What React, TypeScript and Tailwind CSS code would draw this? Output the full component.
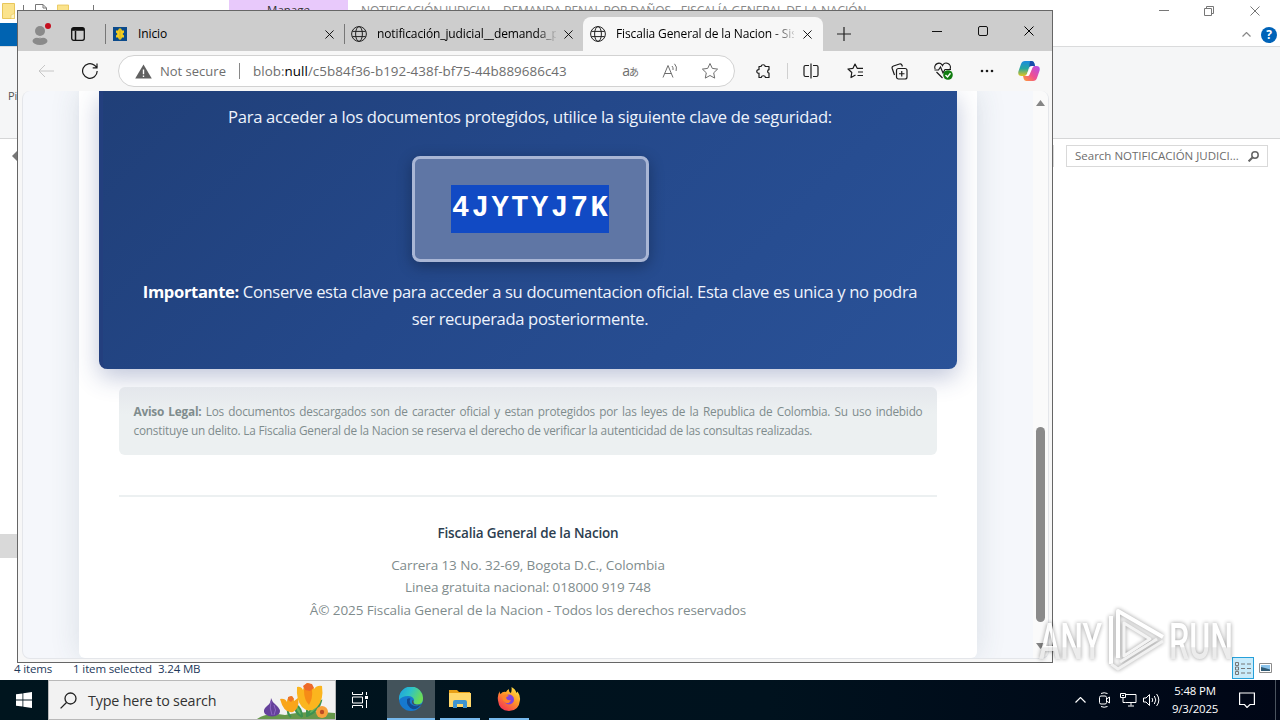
import React from "react";
import clsx from "clsx";

function CloseIcon({ className }: { className?: string }) {
  return (
    <svg viewBox="0 0 10 10" fill="none" stroke="currentColor" className={clsx("shrink-0", className)}>
      <path d="M.5.5l9 9M9.5.5l-9 9" />
    </svg>
  );
}

function GlobeIcon() {
  return (
    <svg viewBox="0 0 16 16" fill="none" stroke="#222" className="h-4 w-4 shrink-0">
      <circle cx="8" cy="8" r="7.4" />
      <ellipse cx="8" cy="8" rx="3.4" ry="7.4" />
      <path d="M1.3 5.4h13.4M1.3 10.6h13.4" />
    </svg>
  );
}

function FolderIcon({ className }: { className?: string }) {
  return (
    <svg viewBox="0 0 13 16" className={className}>
      <path d="M.5.5h12v15H.5z" fill="#fbe38c" stroke="#e8c65a" />
      <path d="M9 15.5V12l3.5-1.500v5z" fill="#fff4c2" stroke="#e8c65a" strokeWidth=".6" />
    </svg>
  );
}

function ExplorerWindow() {
  return (
    <div className="flex h-[680px] flex-col bg-white">
      <div className="flex h-[23px] shrink-0">
        <div className="flex w-[229px] pl-0.5 pt-[3px]">
          <FolderIcon className="h-4 w-[13px]" />
          <div className="ml-2 mt-0.5 h-4 w-px bg-[#777]" />
          <svg viewBox="0 0 12 14" fill="#fff" stroke="#777" className="ml-[11px] mt-px h-3.5 w-3">
            <path d="M.5.5h7.500l3.500 3.500v9.500H.5zM8 .5V4h3.500" />
          </svg>
          <FolderIcon className="ml-2.5 mt-px h-4 w-3" />
          <div className="ml-6 mt-0.5 h-4 w-px bg-[#777]" />
        </div>
        <div className="h-full w-[119px] bg-[#e8c9fb] pt-[2px] text-center text-[11.5px] leading-4 text-[#333]">Manage</div>
        <div className="ml-[13px] w-[520px] whitespace-nowrap pt-[3px] text-[12px] leading-4 tracking-[-0.1px] text-[#888]">
          NOTIFICACIÓN JUDICIAL - DEMANDA PENAL POR DAÑOS - FISCALÍA GENERAL DE LA NACIÓN
        </div>
        <div className="ml-auto flex items-center pr-5 pb-0.5 text-[#777]">
          <div className="h-px w-2.5 bg-[#777]" />
          <svg viewBox="0 0 10 10" fill="none" stroke="currentColor" className="ml-[35px] h-2.5 w-2.5">
            <path d="M.5 2.500h7v7h-7zM2.500 2.500v-2h7v7h-2" />
          </svg>
          <CloseIcon className="ml-9 h-2.5 w-2.5" />
        </div>
      </div>
      <div className="flex h-6 shrink-0 items-center border-b border-[#dadbdc]">
        <div className="h-full w-[18px] bg-[#0063b1]" />
        <svg viewBox="0 0 9 5" fill="none" stroke="#888" strokeWidth="1.2" className="ml-auto h-[5px] w-[9px]">
          <path d="M.5 4.500l4-4 4 4" />
        </svg>
        <div className="ml-2.5 mr-[3px] flex h-4 w-4 items-center justify-center rounded-full bg-[#0063b8] text-xs font-bold text-white">?</div>
      </div>
      <div className="h-[92px] shrink-0 border-b border-[#d5d6d7] bg-[#f5f6f7] pl-2 pt-[41px] text-[11px] leading-4 text-[#555]">Pi</div>
      <div className="flex h-[34px] shrink-0 items-center">
        <svg viewBox="0 0 8 10" className="ml-3 h-2.5 w-2" fill="#777">
          <path d="M0 5l5-5h3v10H5z" />
        </svg>
        <div className="ml-auto h-[22px] w-px bg-[#d9d9d9]" />
        <div className="ml-3 mr-3 flex h-[22px] w-[202px] items-center justify-between border border-[#d9d9d9] pl-2 pr-2 text-[11.5px] text-[#6d6d6d]">
          <span className="whitespace-nowrap">Search NOTIFICACIÓN JUDICI...</span>
          <svg viewBox="0 0 11 11" fill="none" stroke="#666" strokeWidth="1.500" className="h-[11px] w-[11px]">
            <circle cx="7" cy="4" r="3.200" />
            <path d="M4.700 6.300L.6 10.400" strokeWidth="2" />
          </svg>
        </div>
      </div>
      <div className="flex-1 pt-[361px]">
        <div className="h-6 w-[18px] bg-[#d9d9d9]" />
      </div>
      <div className="flex h-6 shrink-0 items-center pl-3.5 pr-2 text-[11.5px] tracking-[-0.15px] text-[#1e395b]">
        <span className="pt-0.5">4 items</span>
        <span className="ml-[21px] pt-0.5">1 item selected</span>
        <span className="ml-1.5 pt-0.5">3.24 MB</span>
        <div className="ml-auto flex h-[22px] w-[22px] items-center justify-center border border-[#26a0da] bg-[#c9ebfa]">
          <svg viewBox="0 0 16 13" fill="none" stroke="#777" className="h-[13px] w-4">
            <path d="M.5.5h3v3h-3zM.5 5h3v3h-3zM.5 9.500h3v3h-3z" />
            <path d="M6 2h4M12 2h4M6 6.500h4M12 6.500h4M6 11h4M12 11h4" />
          </svg>
        </div>
        <svg viewBox="0 0 13 10" className="ml-[5px] h-2.5 w-[13px]">
          <path d="M.5.5h12v9H.5z" fill="#fff" stroke="#8c8c8c" />
          <path d="M2 2h9v6H2z" fill="#8cc4ec" />
          <path d="M2 4l4 1 5 1.500V8H2z" fill="#315b75" />
        </svg>
      </div>
    </div>
  );
}

function TabStrip() {
  return (
    <div className="flex h-10 shrink-0 items-center bg-[#cdcdcd] pt-1.5 text-[12px] tracking-[-0.12px] text-black">
      <svg viewBox="0 0 22 22" className="ml-[11px] h-[22px] w-[22px]">
        <circle cx="11" cy="8" r="5" fill="#8a8a8a" />
        <ellipse cx="11" cy="18" rx="7.500" ry="4" fill="#8a8a8a" />
        <path d="M5 13.600q6 2.500 12 0" stroke="#cdcdcd" fill="none" />
        <circle cx="19" cy="3" r="3" fill="#c50f1f" />
      </svg>
      <svg viewBox="0 0 14 14" fill="none" stroke="#111" strokeWidth="1.300" className="ml-5 h-3.5 w-3.5">
        <rect x=".7" y=".7" width="12.600" height="12.600" rx="2" />
        <path d="M1 3h12M1 1.800h12M4.500 4v9" strokeWidth="1.500" />
      </svg>
      <div className="ml-5 h-5 w-px bg-[#777]" />
      <svg viewBox="0 0 14 14" className="ml-[7px] h-3.5 w-3.5">
        <path d="M0 0h14v14H0z" fill="#0b4a8b" />
        <path d="M6 1.500h2l1 2h2v2L9.500 7 11 8.500v2H9l-1 2H6l-1-2H3v-2L4.500 7 3 5.500v-2h2z" fill="#f5cd1d" />
        <path d="M7 2v10" stroke="#b99c28" strokeWidth=".6" />
      </svg>
      <span className="ml-[11px] w-[187px]">Inicio</span>
      <CloseIcon className="h-[9px] w-[9px]" />
      <div className="ml-2.5 h-5 w-px bg-[#777]" />
      <div className="ml-1.5 flex w-[232px] items-center">
        <GlobeIcon />
        <span className="ml-2.5 w-[179px] overflow-hidden whitespace-nowrap bg-[linear-gradient(90deg,#000_160px,transparent_181px)] bg-clip-text text-transparent">
          notificación_judicial__demanda_penal
        </span>
        <CloseIcon className="ml-[8px] h-[9px] w-[9px]" />
      </div>
      <div className="flex h-[34px] w-[240px] items-center rounded-t-lg bg-[#f7f7f7] pl-[7px]">
        <GlobeIcon />
        <span className="ml-2.5 w-[178px] overflow-hidden whitespace-nowrap bg-[linear-gradient(90deg,#000_155px,transparent_183px)] bg-clip-text text-transparent">
          Fiscalia General de la Nacion - Sistema
        </span>
        <CloseIcon className="ml-[9px] h-[9px] w-[9px]" />
      </div>
      <svg viewBox="0 0 14 14" stroke="#222" className="ml-[14px] h-3.5 w-3.5">
        <path d="M7 0v14M0 7h14" strokeWidth="1.200" />
      </svg>
      <div className="mb-1.5 ml-auto mr-[18px] flex items-center">
        <div className="h-px w-2.5 bg-[#111]" />
        <div className="ml-9 h-2.5 w-2.5 rounded-[2px] border border-[#111]" />
        <CloseIcon className="ml-[36px] h-2.5 w-2.5" />
      </div>
    </div>
  );
}

function Toolbar() {
  return (
    <div className="flex h-10 shrink-0 items-center bg-[#f7f7f7] text-[#1b1b1b]">
      <svg viewBox="0 0 16 14" fill="none" stroke="#c6c6c6" className="ml-5 h-3.5 w-4">
        <path d="M16 7H1M7 1L1 7l6 6" />
      </svg>
      <svg viewBox="0 0 16 16" fill="none" stroke="currentColor" strokeWidth="1.200" className="ml-7 h-4 w-4">
        <path d="M15.200 8A7.300 7.300 0 1 1 12.500 2.300L15 4.500M15 .5v4.300h-4.300" />
      </svg>
      <div className="ml-5 flex h-8 w-[617px] items-center rounded-full border border-[#d2d2d2] bg-white pl-4 text-[13px] text-[#6e6e6e]">
        <svg viewBox="0 0 16 14" className="h-[15px] w-[17px]">
          <path d="M8 .3L15.800 13.700H.2z" fill="#616161" />
          <path d="M8 5v4.500M8 10.800v1.400" stroke="#fff" strokeWidth="1.300" />
        </svg>
        <span className="ml-2 w-[67px] whitespace-nowrap pt-px">Not secure</span>
        <div className="ml-3 h-4 w-px bg-[#888]" />
        <span className="ml-[13px] whitespace-nowrap pt-px text-[13.4px] tracking-[0.04px]">
          blob:<span className="text-black">null</span>/c5b84f36-b192-438f-bf75-44b889686c43
        </span>
        <div className="ml-auto mr-[15px] flex items-center">
          <span className="font-['Open_Sans','Noto_Sans_CJK_JP',sans-serif] text-[14px] leading-4 tracking-[-1px]">
            a<span className="text-[10px]">あ</span>
          </span>
          <svg viewBox="0 0 17 16" fill="none" stroke="#6e6e6e" className="ml-6 h-4 w-[17px]">
            <path d="M1 14.500L6 2.500l5 12M2.700 10.500h6.600M10 3q1.500 1.500 1 4M12.500.8q3 3 1.600 7.200" />
          </svg>
          <svg viewBox="0 0 18 18" fill="none" stroke="#6e6e6e" className="ml-[22px] h-[18px] w-[18px]">
            <path d="M9 1.500l2.300 4.900 5.300.7-3.900 3.700 1 5.300L9 13.500l-4.700 2.600 1-5.300L1.400 7.100l5.300-.7z" strokeLinejoin="round" />
          </svg>
        </div>
      </div>
      <svg viewBox="0 0 16 16" fill="none" stroke="currentColor" strokeWidth="1.200" className="ml-[21px] h-4 w-4">
        <path d="M5 3.500a2.200 2.200 0 0 1 4.300 0H13v3.200a1.800 1.800 0 0 0 0 3.500v4.300H9.500a2.200 2.200 0 0 0-4.300 0H3v-4.300a1.800 1.800 0 1 1 0-3.500V3.500z" strokeLinejoin="round" />
      </svg>
      <div className="ml-[15px] h-4 w-px bg-[#d0d0d0]" />
      <svg viewBox="0 0 16 16" fill="none" stroke="currentColor" strokeWidth="1.200" className="ml-[15px] h-4 w-4">
        <path d="M6 2.500H2.500a1.500 1.500 0 0 0-1.500 1.500v8a1.500 1.500 0 0 0 1.500 1.500H6M10 2.500h3.500A1.500 1.500 0 0 1 15 4v8a1.500 1.500 0 0 1-1.500 1.500H10M8 .5v15" />
      </svg>
      <svg viewBox="0 0 17 16" fill="none" stroke="currentColor" strokeWidth="1.200" className="ml-7 h-4 w-[17px]">
        <path d="M8.500 12L4 14.500l.8-5L1 6l5-.7L8 1l2.200 4.300H16M11 9h5M10.500 12.500H16" strokeLinejoin="round" />
      </svg>
      <svg viewBox="0 0 17 17" fill="none" stroke="currentColor" strokeWidth="1.200" className="ml-[27px] h-[17px] w-[17px]">
        <rect x="5.500" y="5.500" width="10.500" height="10.500" rx="2" />
        <path d="M10.750 8v5.500M8 10.750h5.500M3.500 12L1.200 5.500A2 2 0 0 1 2.500 3l6-2a2 2 0 0 1 2.500 1.300l.4 1.200" />
      </svg>
      <svg viewBox="0 0 19 18" fill="none" stroke="currentColor" strokeWidth="1.200" className="ml-[26px] h-[18px] w-[19px]">
        <path d="M1.200 7a4 4 0 0 1 7.300-3.500A4 4 0 0 1 16 7M2.500 10l6 6M.5 8h4l2-3 2.500 6 2-3.500h6" />
        <circle cx="14" cy="13" r="4.800" fill="#107c10" stroke="none" />
        <path d="M11.500 13l2 2 3-3.700" stroke="#fff" strokeWidth="1.400" />
      </svg>
      <svg viewBox="0 0 14 4" fill="currentColor" className="ml-[27px] h-1 w-3.5">
        <circle cx="2" cy="2" r="1.300" /><circle cx="7" cy="2" r="1.300" /><circle cx="12" cy="2" r="1.300" />
      </svg>
      <svg viewBox="0 0 22 20" className="ml-[24px] h-5 w-[22px]">
        <defs>
          <linearGradient id="cpA" x1="0" y1="0" x2="0" y2="1">
            <stop offset="0" stopColor="#1b8be0" /><stop offset=".5" stopColor="#27a7a0" /><stop offset="1" stopColor="#e3c41c" />
          </linearGradient>
          <linearGradient id="cpB" x1="1" y1="0" x2="0" y2="1">
            <stop offset="0" stopColor="#b04df0" /><stop offset=".55" stopColor="#f0508f" /><stop offset="1" stopColor="#ffa032" />
          </linearGradient>
        </defs>
        <path d="M7 0h6.500q2 0 2.700 2l.8 3h-3.500q-2 0-2.700 2.200L9 13q-.8 2-2.800 2H3.500Q-.5 15 .4 10.500L3 3Q4 0 7 0z" fill="url(#cpA)" />
        <path d="M12 0h1.500q2 0 2.700 2l.8 3h-3.500q-1.500 0-2.200 1z" fill="#174bab" />
        <path d="M15 20H8.500q-2 0-2.700-2L5 15h1.500q2.500 0 3.200-2.200L11.500 7q.6-2 2.600-2h4.400q4 0 3.100 4.500L19 17q-1 3-4 3z" fill="url(#cpB)" />
        <path d="M11.700 6.500L9 13q-.6 2-2.200 2h3q1.200 0 1.800-1.500L14 8q.5-2 2-3h-2q-1.700 0-2.300 1.500z" fill="#fff" />
      </svg>
    </div>
  );
}

function AccessKey() {
  return (
    <div className="h-[278px] rounded-b-lg border-l-4 border-[#233f7e] bg-[linear-gradient(135deg,#203f78_0%,#24488a_45%,#2a5298_100%)] px-9 pt-3 text-center text-[16.6px] leading-[27px] text-[#eef3fc] shadow-[0_8px_25px_rgba(42,64,130,0.3)]">
      <p className="tracking-[-0.3px]">Para acceder a los documentos protegidos, utilice la siguiente clave de seguridad:</p>
      <div className="mx-auto mt-[26px] flex h-[106px] w-[237px] items-start justify-center rounded-lg border-3 border-[#a9b6d5] bg-[#5f76a5] pt-[26px] shadow-[0_4px_15px_rgba(0,0,0,0.3)]">
        <span className="block h-12 w-[158px] whitespace-nowrap bg-[#114ac4] pl-px text-left font-['Liberation_Mono',monospace] text-[28.8px] font-bold leading-[48px] tracking-[2.5px] text-white">
          4JYTYJ7K
        </span>
      </div>
      <p className="mt-4 whitespace-nowrap tracking-[-0.355px]">
        <b className="text-white">Importante:</b> Conserve esta clave para acceder a su documentacion oficial. Esta clave es unica y no podra
        <br />
        ser recuperada posteriormente.
      </p>
    </div>
  );
}

function Page() {
  return (
    <div className="flex h-[568px] w-[1027px] overflow-hidden rounded-lg border border-t-0 border-[#e4e6ea] bg-[#f5f7fb]">
      <div className="ml-14 h-[567px] w-[898px] rounded-b-md bg-white px-5 shadow-[0_0_30px_rgba(50,80,100,0.14)]">
        <AccessKey />
        <div className="mx-5 mt-[18px] h-[68px] rounded-md bg-[#ecf0f1] bg-linear-to-b from-[#e4e7ec] to-[#ecf0f1] to-40% px-[14.5px] pt-[15px] text-justify text-[11.8px] leading-[19px] tracking-[-0.22px] text-[#7f8c8d]">
          <b>Aviso Legal:</b> Los documentos descargados son de caracter oficial y estan protegidos por las leyes de la
          Republica de Colombia. Su uso indebido constituye un delito. La Fiscalia General de la Nacion se reserva el
          derecho de verificar la autenticidad de las consultas realizadas.
        </div>
        <footer className="mx-5 mt-10 border-t-2 border-[#ecf0f1] pt-[25px] text-center text-[13.5px] leading-[22.500px] tracking-[-0.1px] text-[#7f8c8d]">
          <p className="mb-[9px] text-[13.5px] font-semibold tracking-[-0.18px] text-[#2c3e50]">Fiscalia General de la Nacion</p>
          <p>Carrera 13 No. 32-69, Bogota D.C., Colombia</p>
          <p>Linea gratuita nacional: 018000 919 748</p>
          <p>Â© 2025 Fiscalia General de la Nacion - Todos los derechos reservados</p>
        </footer>
      </div>
      <div className="ml-auto flex w-[15px] flex-col items-center bg-[#fafafa] pt-[9px] pb-[9px]">
        <svg viewBox="0 0 9 6" className="h-1.5 w-[9px]" fill="#858585"><path d="M4.500 0L9 6H0z" /></svg>
        <div className="mt-[321px] h-[195px] w-[9px] rounded-full bg-[#8a8a8a]" />
        <svg viewBox="0 0 9 6" className="mt-auto h-1.5 w-[9px]" fill="#858585"><path d="M4.500 6L9 0H0z" /></svg>
      </div>
    </div>
  );
}

function BrowserWindow() {
  return (
    <div className="absolute left-[17px] top-2.5 flex h-[653px] w-[1036px] flex-col border border-[#666] bg-[#f7f7f7]">
      <TabStrip />
      <Toolbar />
      <div className="pl-1">
        <Page />
      </div>
    </div>
  );
}

function Flowers() {
  return (
    <svg viewBox="0 0 80 38" className="h-[38px] w-20">
      <path d="M2 38Q12 31 30 34Q50 29 80 32V38z" fill="#66984b" />
      <path d="M16 17q1 4 5 7q6 5 3 9q-7 5-14 0q-3-4 2-8q4-3 4-8z" fill="#65419b" />
      <path d="M16 20q-2 7 1 14M19 24q3 5 0 10" stroke="#8e68c2" fill="none" />
      <path d="M33 28q-1 5 3 8M52 25v11M52 35q5-12 14-15q-2 10-14 15M47 36q-8-5-7-13q7 4 7 13" stroke="#3d9150" strokeWidth="2" fill="#67b35e" />
      <path d="M25 18q5-1 7 3q0-5 4-6q3 1 3 5l4-3q2 10-5 14q-9 2-13-13z" fill="#f9a51a" />
      <path d="M42 6q4-1 6 3q1-6 5-7q4 1 6 6q3-4 8-3q2 14-5 21q-8 7-15 0q-6-7-5-20z" fill="#fbb51e" />
      <path d="M49 9q4-6 8 0q1 8-3 15q-5-5-5-15z" fill="#f68b16" />
      <path d="M48 5l4-3 5 1 2 4-4 3-5-1z" fill="#ed6a2a" />
      <path d="M33 16l4-1 2 3-3 3-3-2z" fill="#ed752a" />
      <circle cx="67" cy="31" r="6" fill="#f7a13c" />
      <circle cx="67" cy="31" r="2.200" fill="#bb4b25" />
    </svg>
  );
}

function EdgeLogo() {
  return (
    <svg viewBox="0 0 24 24" className="h-6 w-6">
      <defs>
        <linearGradient id="edgeTop" x1="0" y1="0" x2="1" y2=".4">
          <stop offset="0" stopColor="#1c9de0" /><stop offset=".5" stopColor="#2dc2c8" /><stop offset="1" stopColor="#6bdc58" />
        </linearGradient>
      </defs>
      <circle cx="12" cy="12" r="12" fill="#1679cf" />
      <path d="M0 11A12 12 0 0 1 24 12q0 5-5.500 5.500-4 0-4-2.500 0-1 .7-2-1.300-4-6.200-4Q3 9 0 13z" fill="url(#edgeTop)" />
      <path d="M8 12.500q-1 7 6 9.800 4 .3 7.500-4.300-5 2.500-9-.5-3-2.500-1-6-2.500-.8-3.500 1z" fill="#124a91" />
      <path d="M14.500 13q-1 2.500 1 4 3.500 1.700 8 0-2 3-4.500 1.500-7 0-6-5z" fill="#43535b" />
    </svg>
  );
}

function FirefoxLogo() {
  return (
    <svg viewBox="0 0 24 24" className="h-6 w-6">
      <defs>
        <linearGradient id="fx" x1=".9" y1="0" x2=".2" y2="1">
          <stop offset="0" stopColor="#fff04a" /><stop offset=".45" stopColor="#ff9a27" /><stop offset="1" stopColor="#f32d57" />
        </linearGradient>
      </defs>
      <path d="M3 4q-.5 2 .5 3Q6 4 9 5q1-2 3-3-.5 3 2 4 1-3 .5-6 4 2 5 6l1-1.500q3 4 2.500 8.500-1 11-11 11T1 13.500Q0 8 3 4z" fill="url(#fx)" />
      <circle cx="12" cy="12.500" r="5" fill="#7f43df" />
      <path d="M5 9q4-3 7 0-3 .5-3 2 1.500 3 5 2-1 3.500-5 3-4-2-4-7z" fill="#ff8428" />
    </svg>
  );
}

function Taskbar() {
  return (
    <div className="flex h-10 items-stretch bg-linear-to-r from-[#00151e] via-[#00121e] via-60% to-[#000616] text-white">
      <div className="flex w-12 items-center justify-center">
        <svg viewBox="0 0 16 16" fill="#fff" className="h-4 w-4">
          <path d="M0 2.300L6.500 1.400v6.200H0zM7.300 1.300L16 0v7.600H7.300zM0 8.400h6.500v6.200L0 13.700zM7.300 8.400H16V16l-8.700-1.300z" />
        </svg>
      </div>
      <div className="flex w-72 items-center border border-[#b9b9b9] bg-[#f2f2f2] pl-[11px] text-[#333]">
        <svg viewBox="0 0 17 17" fill="none" stroke="#222" strokeWidth="1.300" className="h-[17px] w-[17px]">
          <circle cx="10.500" cy="6.500" r="5.500" />
          <path d="M6.500 10.500L.6 16.400" />
        </svg>
        <span className="ml-[11px] whitespace-nowrap pt-0.5 text-[14.3px] tracking-[-0.17px]">Type here to search</span>
        <div className="ml-auto"><Flowers /></div>
      </div>
      <div className="flex w-[51px] items-center pl-4">
        <svg viewBox="0 0 16 16" fill="none" stroke="#fff" className="h-4 w-4">
          <path d="M.5 0v2.500h10V0M.5 5h10v6H.5zM.5 16v-2.500h10V16M14.500 0v3M14.500 8v8" />
          <path d="M13 4h3v3h-3z" fill="#fff" stroke="none" />
        </svg>
      </div>
      <div className="flex w-12 items-center justify-center border-b-2 border-[#76b9ed] bg-[#43535b]"><EdgeLogo /></div>
      <div className="ml-[5px] flex w-10 items-center justify-center border-b-2 border-[#76b9ed]">
        <svg viewBox="0 0 22 18" className="h-[18px] w-[22px]">
          <path d="M0 0h8l2 2h11v5H0z" fill="#e8a018" />
          <path d="M0 3h22v14H0z" fill="#ffd76a" />
          <path d="M4 18v-6q0-2 2-2h10q2 0 2 2v6h-4v-4H8v4z" fill="#3d94d0" />
        </svg>
      </div>
      <div className="ml-[9px] flex w-10 items-center justify-center border-b-2 border-[#76b9ed]"><FirefoxLogo /></div>
      <div className="ml-auto flex items-center">
        <svg viewBox="0 0 11 6" fill="none" stroke="#fff" strokeWidth="1.200" className="h-1.5 w-[11px]">
          <path d="M.5 5.500l5-5 5 5" />
        </svg>
        <svg viewBox="0 0 11 16" fill="none" stroke="#fff" className="ml-[13px] h-4 w-[11px]">
          <rect x=".5" y="4" width="7" height="8" rx="1.500" />
          <path d="M7.500 7L10.500 5v6l-3-2M2 1.500Q5 0 8.500 1.500M2 14.500Q5 16 8.500 14.500" />
        </svg>
        <svg viewBox="0 0 17 14" fill="none" stroke="#fff" className="ml-2.5 h-3.5 w-[17px]">
          <path d="M6 1.500h10v8H5.500M3 5v4.500h2.500M11 9.500v3M8 13h6M.5.5h5v4h-5zM2 2.500h2" />
        </svg>
        <svg viewBox="0 0 17 14" fill="none" stroke="#fff" className="ml-1.5 h-3.5 w-[17px]">
          <path d="M.5 5h2.500l3.500-3.500v11L3 9H.5zM9 5q1.500 2 0 4M11.300 3q3 4 0 8M13.600 1q4.500 6 0 12" />
        </svg>
        <div className="ml-[9px] w-[52px] whitespace-nowrap text-center text-[11.4px] leading-[18px] tracking-[-0.15px]">
          <div>5:48 PM</div>
          <div>9/3/2025</div>
        </div>
        <svg viewBox="0 0 16 16" fill="none" stroke="#fff" strokeWidth="1.200" className="ml-[18px] h-4 w-4">
          <path d="M.6 1h14.800v11.500H11L8 15.500l-2.500-3H.6z" />
        </svg>
        <div className="ml-5 h-10 w-px bg-[#4a535e]" />
        <div className="w-[4px]" />
      </div>
    </div>
  );
}

function Watermark() {
  return (
    <svg viewBox="0 0 200 68" className="absolute left-[1038px] top-[606px] h-[68px] w-[200px] opacity-80 drop-shadow-[0_0_2px_rgba(0,0,0,0.5)]">
      <defs>
        <linearGradient id="wm" x1="0" y1="0" x2="0" y2="1">
          <stop offset=".58" stopColor="#fff" /><stop offset=".6" stopColor="#e8e8e8" />
        </linearGradient>
      </defs>
      <g fill="url(#wm)" fontFamily="Roboto, sans-serif" fontSize="50" fontWeight="500">
        <text x="1" y="53" textLength="63" lengthAdjust="spacingAndGlyphs">ANY</text>
        <text x="131" y="53" textLength="64" lengthAdjust="spacingAndGlyphs">RUN</text>
      </g>
      <g fill="none" stroke="#fff" strokeWidth="4" strokeLinejoin="round">
        <path d="M80 52V5L125 31" />
        <path d="M73 10V58" />
        <path d="M86 17V50L112 33z" stroke="#f2f2f2" strokeWidth="3" />
        <path d="M73 58L80 63L125 35M82 56L119 33" stroke="#eee" strokeWidth="3" />
      </g>
    </svg>
  );
}

export default function App() {
  return (
    <div className="relative h-[720px] w-[1280px] overflow-hidden bg-white font-['Open_Sans','Noto_Sans',sans-serif]">
      <ExplorerWindow />
      <BrowserWindow />
      <Taskbar />
      <Watermark />
    </div>
  );
}
